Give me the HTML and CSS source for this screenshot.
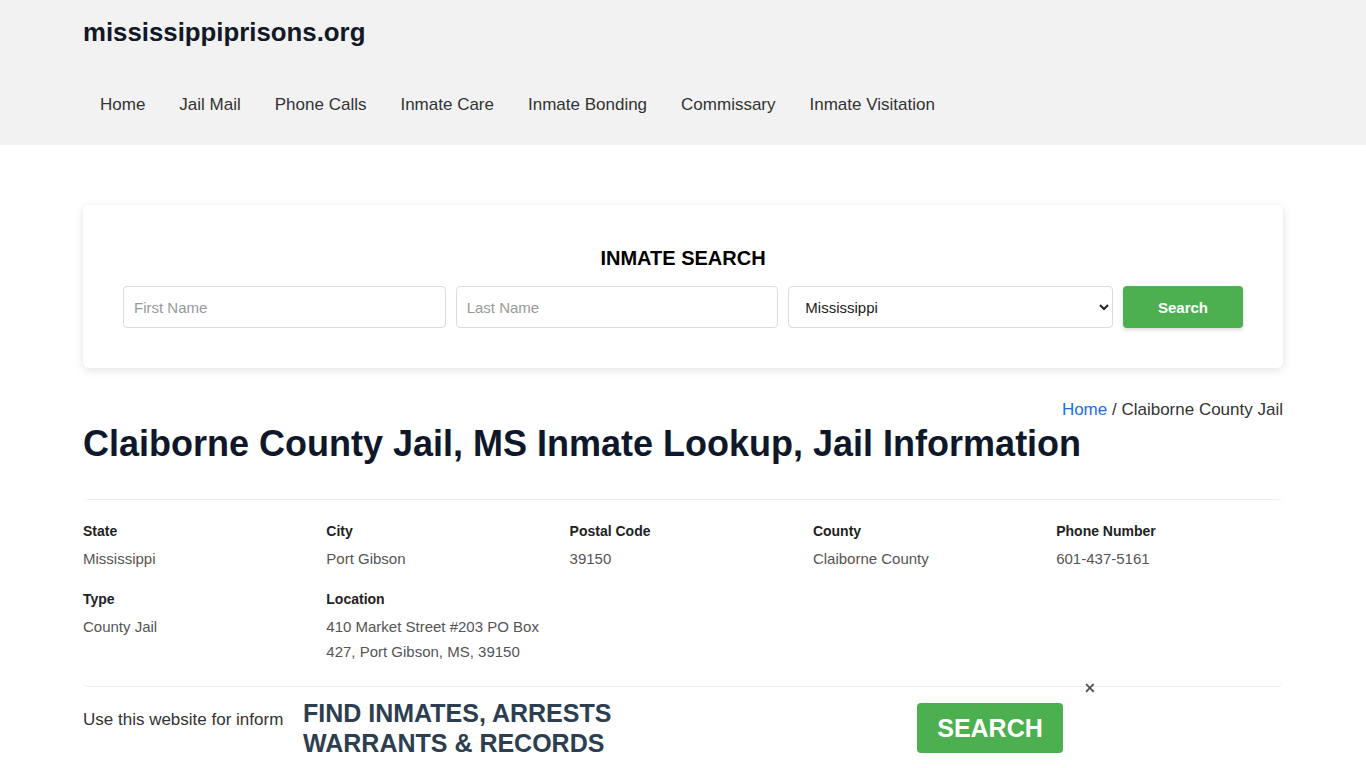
FILE: index.html
```html
<!DOCTYPE html>
<html lang="en">
<head>
<meta charset="utf-8">
<title>Claiborne County Jail, MS Inmate Lookup, Jail Information</title>
<link rel="stylesheet" href="styles.css">
</head>
<body>
<header class="site-header">
  <div class="container">
    <div class="logo">mississippiprisons.org</div>
    <nav class="nav">
      <a href="#">Home</a>
      <a href="#">Jail Mail</a>
      <a href="#">Phone Calls</a>
      <a href="#">Inmate Care</a>
      <a href="#">Inmate Bonding</a>
      <a href="#">Commissary</a>
      <a href="#">Inmate Visitation</a>
    </nav>
  </div>
</header>
<main class="container">
  <section class="search-card">
    <h2 class="search-title">INMATE SEARCH</h2>
    <form class="search-form">
      <input class="field" type="text" placeholder="First Name">
      <input class="field" type="text" placeholder="Last Name">
      <select class="field select"><option>Mississippi</option></select>
      <button class="btn-search" type="button">Search</button>
    </form>
  </section>
  <div class="breadcrumb"><a href="#">Home</a> / Claiborne County Jail</div>
  <h1 class="page-title">Claiborne County Jail, MS Inmate Lookup, Jail Information</h1>
  <section class="info">
    <div class="info-grid">
      <div class="item"><div class="label">State</div><div class="value">Mississippi</div></div>
      <div class="item"><div class="label">City</div><div class="value">Port Gibson</div></div>
      <div class="item"><div class="label">Postal Code</div><div class="value">39150</div></div>
      <div class="item"><div class="label">County</div><div class="value">Claiborne County</div></div>
      <div class="item"><div class="label">Phone Number</div><div class="value">601-437-5161</div></div>
      <div class="item"><div class="label">Type</div><div class="value">County Jail</div></div>
      <div class="item"><div class="label">Location</div><div class="value">410 Market Street #203 PO Box 427, Port Gibson, MS, 39150</div></div>
    </div>
  </section>
  <p class="intro">Use this website for inform</p>
</main>
<div class="ad">
  <div class="ad-text">FIND INMATES, ARRESTS<br>WARRANTS &amp; RECORDS</div>
  <a class="ad-btn" href="#">SEARCH</a>
  <span class="ad-close">&#x2715;</span>
</div>
</body>
</html>
```
FILE: styles.css
```css
* { box-sizing: border-box; }
html, body { margin: 0; padding: 0; }
body {
  font-family: "Liberation Sans", Arial, sans-serif;
  color: #333;
  background: #fff;
  overflow: hidden;
}
.container { width: 1200px; margin: 0 auto; }
.site-header { background: #f2f2f2; padding: 15px 0 15px; }
.logo {
  font-size: 25.8px;
  line-height: 34px;
  font-weight: 700;
  color: #111827;
}
.nav { display: flex; margin-top: 31px; }
.nav a {
  display: block;
  padding: 15px 17px;
  line-height: 20px;
  font-size: 17px;
  color: #333;
  text-decoration: none;
}
.search-card {
  margin-top: 60px;
  background: #fff;
  border-radius: 6px;
  box-shadow: 0 2px 10px rgba(0,0,0,0.12);
  padding: 41px 40px 40px;
}
.search-title {
  margin: 0 0 16px;
  text-align: center;
  font-size: 20px;
  line-height: 24px;
  font-weight: 700;
  color: #000;
}
.search-form { display: flex; gap: 10px; }
.field {
  flex: 1 1 0;
  min-width: 0;
  height: 42px;
  border: 1px solid #dcdcdc;
  border-radius: 4px;
  padding: 0 10px;
  font-family: "Liberation Sans", Arial, sans-serif;
  font-size: 15px;
  color: #222;
  background: #fff;
}
.field::placeholder { color: #999; }
.select { padding-left: 12px; }
.btn-search {
  width: 120px;
  flex: none;
  height: 42px;
  border: 0;
  border-radius: 4px;
  background: #4caf50;
  color: #fff;
  font-family: "Liberation Sans", Arial, sans-serif;
  font-size: 15px;
  font-weight: 700;
  box-shadow: 0 2px 4px rgba(0,0,0,0.15);
}
.breadcrumb {
  margin-top: 32px;
  text-align: right;
  font-size: 17px;
  line-height: 20px;
  color: #333;
}
.breadcrumb a { color: #1a6ee6; text-decoration: none; }
.page-title {
  margin: 3px 0 0;
  font-size: 36px;
  line-height: 42px;
  font-weight: 700;
  color: #0f172a;
}
.info {
  margin-top: 34px;
  border-top: 1px solid #eee;
  border-bottom: 1px solid #eee;
  border-radius: 6px;
  padding: 21px 0 22px;
}
.info-grid {
  display: grid;
  grid-template-columns: repeat(5, 243.3px);
  row-gap: 18px;
}
.item { padding-right: 16px; }
.label {
  font-size: 14px;
  line-height: 20px;
  font-weight: 700;
  color: #222;
  margin-bottom: 5px;
}
.value {
  font-size: 15px;
  line-height: 25px;
  color: #555;
}
.intro {
  margin: 21px 0 0;
  font-size: 17px;
  line-height: 24px;
  color: #333;
  white-space: nowrap;
}
.ad {
  position: fixed;
  bottom: 0;
  left: 290px;
  width: 786px;
  height: 75px;
  background: #fff;
  display: flex;
  align-items: center;
  justify-content: space-between;
  padding: 0 13px;
}
.ad-text {
  font-size: 25px;
  line-height: 30px;
  font-weight: 700;
  color: #2c3e50;
  margin-top: -6px;
}
.ad-btn {
  width: 146px;
  height: 50px;
  background: #4caf50;
  border-radius: 4px;
  color: #fff;
  text-decoration: none;
  font-size: 25px;
  font-weight: 700;
  display: flex;
  align-items: center;
  justify-content: center;
  margin-top: -5px;
}
.ad-close {
  position: absolute;
  top: -13px;
  right: -20px;
  font-size: 14px;
  font-weight: 700;
  color: #555;
}
```
